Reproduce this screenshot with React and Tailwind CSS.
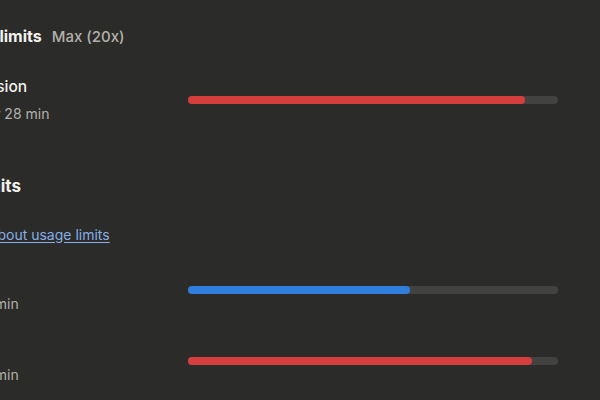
import React from 'react';

const rows = [
  { label: 'All models', reset: 'Resets in 47 min', pct: 60, color: 'bg-[#2f7ddc]' },
  { label: 'Opus only', reset: 'Resets in 47 min', pct: 93, color: 'bg-[#d63d3d]' },
];

const Bar = ({ pct, color }) => (
  <div className="h-2 w-[370px] rounded-full bg-[#424241]">
    <div className={`h-2 rounded-full ${color}`} style={{ width: `${pct}%` }} />
  </div>
);

const Row = ({ label, reset, pct, color }) => (
  <div className="flex items-center">
    <div className="w-[278px] shrink-0">
      <div className="text-[15.5px] leading-5 font-medium text-[#f2f1ec]">{label}</div>
      <div className="mt-2 text-sm leading-[18px] text-[#b3b1a9]">{reset}</div>
    </div>
    <Bar pct={pct} color={color} />
  </div>
);

export default function App() {
  return (
    <div className="w-[600px] h-[400px] overflow-hidden bg-[#2b2b2a] font-['Inter',sans-serif]">
      <div className="-ml-[90px] w-[648px] pt-6">
        <div className="flex items-baseline gap-2.5">
          <h2 className="text-base leading-6 font-bold text-[#f2f1ec]">Plan usage limits</h2>
          <span className="text-[15px] font-medium text-[#b3b1a9]">Max (20x)</span>
        </div>

        <div className="mt-7">
          <Row label="Current session" reset="Resets in 4 hr 28 min" pct={91} color="bg-[#d63d3d]" />
        </div>

        <h3 className="mt-[51px] text-[17px] leading-6 font-bold text-[#f2f1ec]">Weekly limits</h3>
        <a className="mt-[27px] block w-fit text-sm leading-5 text-[#86aee6] underline underline-offset-2">
          Learn more about usage limits
        </a>

        <div className="mt-[22px] flex flex-col gap-[25px]">
          {rows.map((r) => (
            <Row key={r.label} {...r} />
          ))}
        </div>
      </div>
    </div>
  );
}
